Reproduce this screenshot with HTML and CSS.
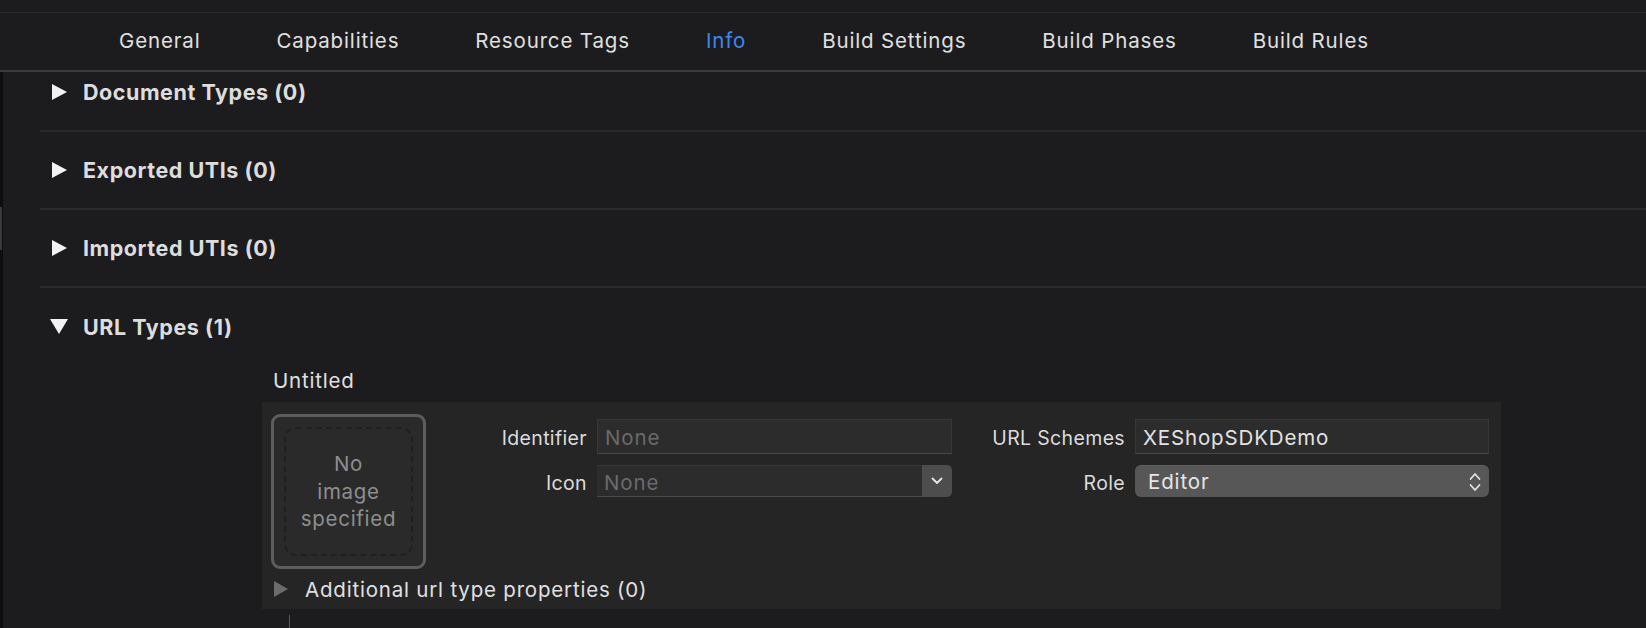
FILE: index.html
```html
<!DOCTYPE html>
<html>
<head>
<meta charset="utf-8">
<title>Info</title>
<link rel="stylesheet" href="styles.css">
</head>
<body>
<div class="app">
  <div class="topstrip"></div>
  <nav class="tabs">
    <span class="tab">General</span>
    <span class="tab">Capabilities</span>
    <span class="tab">Resource Tags</span>
    <span class="tab active">Info</span>
    <span class="tab">Build Settings</span>
    <span class="tab">Build Phases</span>
    <span class="tab">Build Rules</span>
  </nav>
  <div class="main">
    <div class="gutter"><div class="gutter-thumb"></div></div>
    <div class="content">
      <div class="scroll">
        <section class="sec">
          <div class="sec-head">
            <span class="disc"><svg width="15" height="16" viewBox="0 0 15 16"><path d="M0 0 L15 8 L0 16 Z" fill="#f2f2f2"/></svg></span>
            <span class="sec-title">Document Types (0)</span>
          </div>
        </section>
        <section class="sec">
          <div class="sec-head">
            <span class="disc"><svg width="15" height="16" viewBox="0 0 15 16"><path d="M0 0 L15 8 L0 16 Z" fill="#f2f2f2"/></svg></span>
            <span class="sec-title">Exported UTIs (0)</span>
          </div>
        </section>
        <section class="sec">
          <div class="sec-head">
            <span class="disc"><svg width="15" height="16" viewBox="0 0 15 16"><path d="M0 0 L15 8 L0 16 Z" fill="#f2f2f2"/></svg></span>
            <span class="sec-title">Imported UTIs (0)</span>
          </div>
        </section>
        <section class="sec open">
          <div class="sec-head url-head">
            <span class="disc"><svg width="18" height="15" viewBox="0 0 18 15"><path d="M0 0 L18 0 L9 15 Z" fill="#f2f2f2"/></svg></span>
            <span class="sec-title">URL Types (1)</span>
          </div>
          <div class="item-title">Untitled</div>
          <div class="panel">
            <div class="panel-top">
              <div class="well">
                <div class="well-inner">No<br>image<br>specified</div>
              </div>
              <div class="form">
                <span class="label">Identifier</span>
                <div class="field placeholder">None</div>
                <span class="label">URL Schemes</span>
                <div class="field">XEShopSDKDemo</div>
                <span class="label">Icon</span>
                <div class="combo">
                  <div class="combo-text placeholder">None</div>
                  <div class="combo-btn"><svg width="12" height="8" viewBox="0 0 12 8"><path d="M1.5 1.5 L6 6 L10.5 1.5" fill="none" stroke="#e6e6e6" stroke-width="1.8" stroke-linecap="round" stroke-linejoin="round"/></svg></div>
                </div>
                <span class="label">Role</span>
                <div class="popup">
                  <span>Editor</span>
                  <svg width="14" height="22" viewBox="0 0 14 22"><path d="M2.5 8 L7 3 L11.5 8 M2.5 14 L7 19 L11.5 14" fill="none" stroke="#e6e6e6" stroke-width="1.7" stroke-linecap="round" stroke-linejoin="round"/></svg>
                </div>
              </div>
            </div>
            <div class="additional">
              <svg width="14" height="16" viewBox="0 0 14 16"><path d="M0 0 L14 8 L0 16 Z" fill="#6c6c6c"/></svg>
              <span>Additional url type properties (0)</span>
            </div>
          </div>
          <div class="next-tick"></div>
        </section>
      </div>
    </div>
  </div>
</div>
</body>
</html>
```

FILE: styles.css
```css
* { box-sizing: border-box; }
html, body {
  margin: 0;
  padding: 0;
  background: #1c1c1e;
  width: 1646px;
  height: 628px;
  overflow: hidden;
  font-family: Inter, "Liberation Sans", sans-serif;
  color: #dedede;
}
.app {
  display: flex;
  flex-direction: column;
  height: 628px;
}
.topstrip {
  height: 13px;
  flex: none;
  border-bottom: 1px solid #2b2b2d;
}
.tabs {
  height: 59px;
  flex: none;
  display: flex;
  align-items: center;
  gap: 76px;
  padding: 0 0 3px 119px;
  border-bottom: 2px solid #3a3a3c;
}
.tab {
  font-size: 20.5px;
  color: #e0e0e0;
  letter-spacing: 0.85px;
}
.tab.active { color: #3d87f3; }

.main {
  flex: 1;
  display: flex;
  min-height: 0;
}
.gutter {
  width: 3px;
  flex: none;
  background: #0d0d0e;
  padding-top: 135px;
}
.gutter-thumb {
  width: 2px;
  height: 43px;
  background: #3a3a3b;
}
.content {
  flex: 1;
  overflow: hidden;
}
.scroll {
  margin-top: -18px;
}
.sec {
  margin-left: 37px;
  border-bottom: 2px solid #2a2a2c;
}
.sec.open { border-bottom: none; }
.sec-head {
  height: 76px;
  display: flex;
  align-items: center;
  padding-left: 10px;
  gap: 15px;
}
.url-head { height: 77px; }
.disc {
  width: 18px;
  display: flex;
  justify-content: center;
  align-items: center;
}
.sec-title {
  font-size: 21.5px;
  font-weight: 700;
  color: #dddddd;
  letter-spacing: 0.55px;
}
.item-title {
  height: 37px;
  padding-left: 233px;
  padding-top: 3px;
  font-size: 20.5px;
  letter-spacing: 0.8px;
  color: #e0e0e0;
}
.panel {
  margin-left: 222px;
  width: 1239px;
  background: #252526;
  padding: 12px 0 0 9px;
}
.panel-top {
  display: flex;
}
.well {
  width: 155px;
  height: 155px;
  flex: none;
  border: 3px solid #5d5d5e;
  border-radius: 9px;
  background: #2a2a2b;
  padding: 10px;
}
.well-inner {
  width: 100%;
  height: 100%;
  border: 2px dashed #202021;
  border-radius: 12px;
  display: flex;
  align-items: center;
  justify-content: center;
  text-align: center;
  font-size: 20.5px;
  line-height: 27.5px;
  letter-spacing: 0.7px;
  color: #8e8e8e;
}
.form {
  margin-top: 5px;
  display: grid;
  grid-template-columns: 161px 355px 163px 354px;
  grid-template-rows: 35px 32px;
  column-gap: 10px;
  row-gap: 11px;
  align-content: start;
}
.label {
  justify-self: end;
  align-self: center;
  font-size: 19.5px;
  letter-spacing: 0.35px;
  color: #dcdcdc;
  padding-top: 3px;
}
.field {
  background: #2c2c2d;
  border: 1px solid #38383a;
  border-bottom-color: #48484a;
  padding: 2px 7px 0;
  font-size: 20.5px;
  letter-spacing: 0.85px;
  line-height: 31px;
  color: #e2e2e2;
}
.placeholder { color: #6a6a6b; }
.combo {
  display: flex;
  border-radius: 0 5px 5px 0;
}
.combo-text {
  flex: 1;
  background: #2c2c2d;
  border-top: 1px solid #38383a;
  border-bottom: 1px solid #4a4a4c;
  padding: 2px 7px 0;
  font-size: 20.5px;
  letter-spacing: 0.85px;
  line-height: 30px;
}
.combo-btn {
  width: 30px;
  background: #4d4d4e;
  border-radius: 0 5px 5px 0;
  display: flex;
  align-items: center;
  justify-content: center;
}
.popup {
  background: #575758;
  border-radius: 6px;
  border-top: 1px solid #5f5f60;
  display: flex;
  align-items: center;
  justify-content: space-between;
  padding: 0 7px 0 13px;
  font-size: 20.5px;
  letter-spacing: 0.85px;
  color: #e6e6e6;
}
.additional {
  height: 40px;
  display: flex;
  align-items: center;
  gap: 17px;
  padding-left: 3px;
  font-size: 20.5px;
  letter-spacing: 0.8px;
  color: #e0e0e0;
}
.next-tick {
  margin: 6px 0 0 249px;
  width: 1px;
  height: 20px;
  background: #5a5a5a;
}
```
